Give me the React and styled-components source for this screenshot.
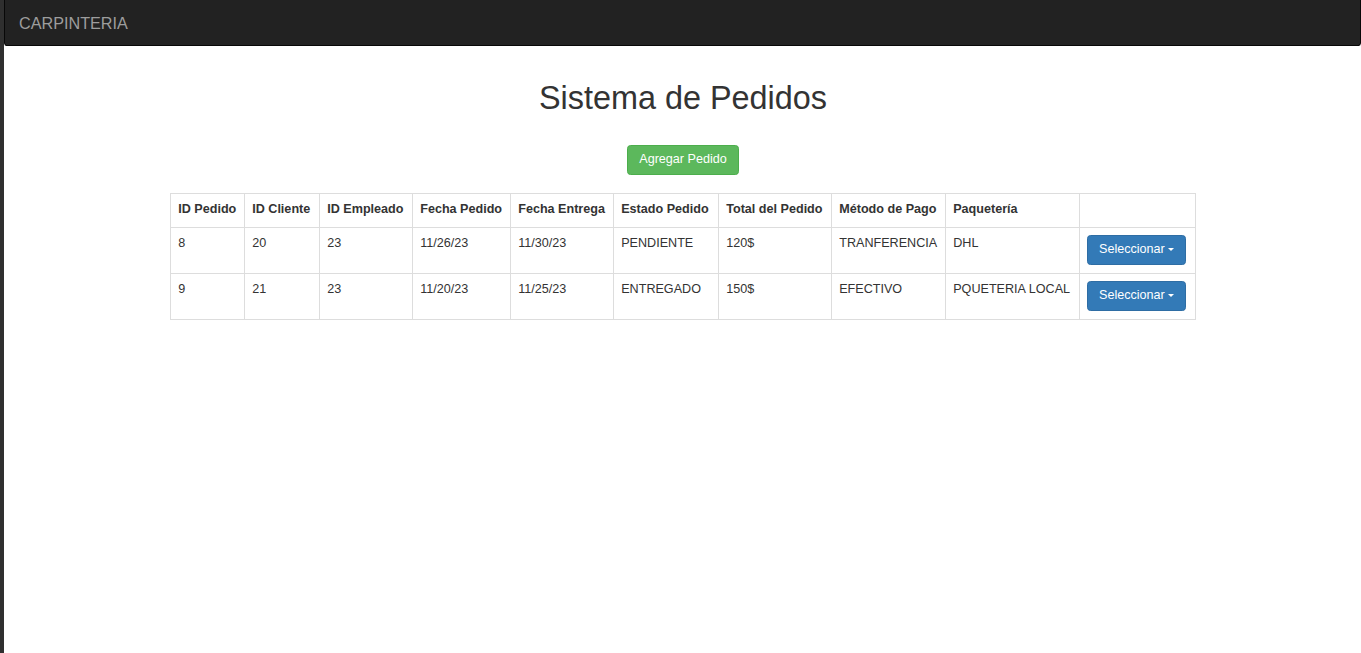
import React from "react";
import styled, { createGlobalStyle } from "styled-components";

const Global = createGlobalStyle`
  html, body { margin: 0; padding: 0; background: #fff; }
  body {
    font-family: "Liberation Sans", Arial, Helvetica, sans-serif;
    font-size: 12.6px;
    line-height: 1.42857;
    color: #333;
  }
  * { box-sizing: border-box; }
`;

const Page = styled.div`
  min-height: 100vh;
  border-left: 4px solid #2f2f2f;
  background: #fff;
`;

const Navbar = styled.nav`
  height: 46px;
  background: #222;
  border: 1px solid #080808;
  border-top: none;
  border-radius: 0 0 3.6px 3.6px;
  display: flex;
  align-items: center;
  padding: 0 14px;
`;

const Brand = styled.a`
  color: #9d9d9d;
  font-size: 16.2px;
  line-height: 18px;
  text-decoration: none;
`;

const Container = styled.main`
  width: 1025px;
  margin: 0 auto;
  padding-left: 1px;
  display: flex;
  flex-direction: column;
  align-items: center;
`;

const Title = styled.h1`
  font-size: 32.4px;
  font-weight: 500;
  line-height: 1.1;
  margin: 35px 0 28px;
  color: #333;
`;

const Btn = styled.button`
  font-family: inherit;
  font-size: 12.6px;
  line-height: 1.42857;
  color: #fff;
  background: ${(p) => (p.$variant === "success" ? "#5cb85c" : "#337ab7")};
  border: 1px solid ${(p) => (p.$variant === "success" ? "#4cae4c" : "#2e6da4")};
  border-radius: 3.6px;
  padding: 5.4px 10.8px;
  height: 30px;
  cursor: pointer;
  display: inline-flex;
  align-items: center;
`;

const Caret = styled.span`
  display: inline-block;
  width: 0;
  height: 0;
  margin-left: 3px;
  border-top: 3.6px solid #fff;
  border-left: 3.6px solid transparent;
  border-right: 3.6px solid transparent;
`;

const Table = styled.table`
  width: 1025px;
  margin-top: 18px;
  border-collapse: collapse;
  border: 1px solid #ddd;
  table-layout: fixed;
`;

const Th = styled.th`
  text-align: left;
  font-weight: bold;
  padding: 7.2px;
  border: 1px solid #ddd;
  vertical-align: bottom;
  height: 34px;
  white-space: nowrap;
`;

const Td = styled.td`
  padding: 7.2px;
  border: 1px solid #ddd;
  vertical-align: top;
  white-space: nowrap;
  height: 46px;
`;

const widths = [74, 75, 93, 98, 103, 105, 113, 114, 134, 116];
const headers = [
  "ID Pedido",
  "ID Cliente",
  "ID Empleado",
  "Fecha Pedido",
  "Fecha Entrega",
  "Estado Pedido",
  "Total del Pedido",
  "Método de Pago",
  "Paquetería",
  "",
];
const rows = [
  ["8", "20", "23", "11/26/23", "11/30/23", "PENDIENTE", "120$", "TRANFERENCIA", "DHL"],
  ["9", "21", "23", "11/20/23", "11/25/23", "ENTREGADO", "150$", "EFECTIVO", "PQUETERIA LOCAL"],
];

export default function App() {
  return (
    <Page>
      <Global />
      <Navbar>
        <Brand href="#">CARPINTERIA</Brand>
      </Navbar>
      <Container>
        <Title>Sistema de Pedidos</Title>
        <Btn $variant="success">Agregar Pedido</Btn>
        <Table>
          <colgroup>
            {widths.map((w, i) => (
              <col key={i} style={{ width: w }} />
            ))}
          </colgroup>
          <thead>
            <tr>
              {headers.map((h, i) => (
                <Th key={i}>{h}</Th>
              ))}
            </tr>
          </thead>
          <tbody>
            {rows.map((r, i) => (
              <tr key={i}>
                {r.map((c, j) => (
                  <Td key={j}>{c}</Td>
                ))}
                <Td>
                  <Btn>
                    Seleccionar <Caret />
                  </Btn>
                </Td>
              </tr>
            ))}
          </tbody>
        </Table>
      </Container>
    </Page>
  );
}
